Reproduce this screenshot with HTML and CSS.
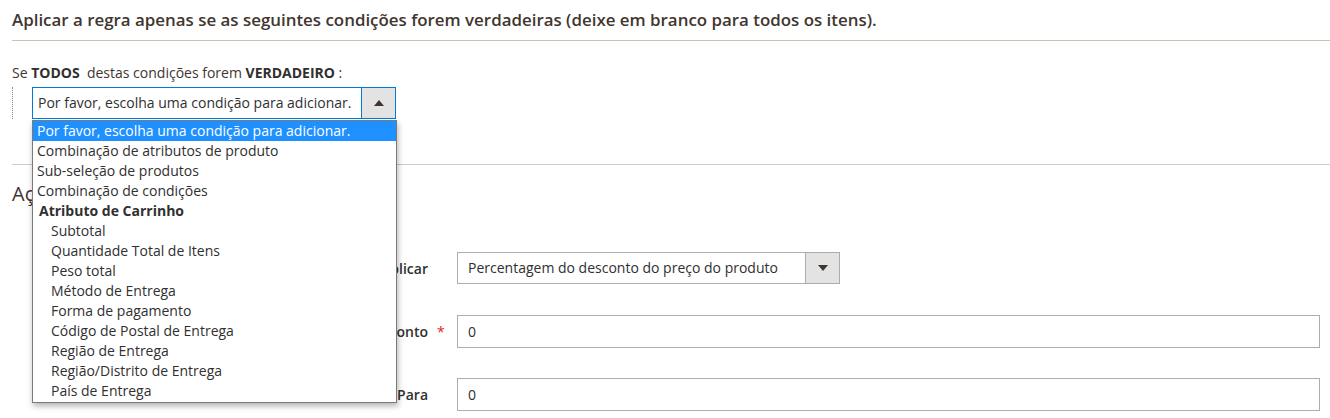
FILE: index.html
```html
<!DOCTYPE html>
<html lang="pt">
<head>
<meta charset="utf-8">
<title>Condições</title>
<link rel="stylesheet" href="styles.css">
</head>
<body>
<div class="page">
  <div class="fs-title">Aplicar a regra apenas se as seguintes condições forem verdadeiras (deixe em branco para todos os itens).</div>
  <div class="rule">
    <p class="rule-head">Se <b>TODOS</b>&nbsp; destas condições forem <b>VERDADEIRO</b> :</p>
    <div class="tree">
      <div class="cond-select">
        <span class="cs-text">Por favor, escolha uma condição para adicionar.</span>
        <span class="cs-btn"><svg width="10" height="6" viewBox="0 0 10 6"><path d="M0 6 L5 0 L10 6 Z" fill="#41362f"/></svg></span>
        <ul class="dropdown">
          <li class="hl">Por favor, escolha uma condição para adicionar.</li>
          <li>Combinação de atributos de produto</li>
          <li>Sub-seleção de produtos</li>
          <li>Combinação de condições</li>
          <li class="grp">Atributo de Carrinho</li>
          <li class="sub">Subtotal</li>
          <li class="sub">Quantidade Total de Itens</li>
          <li class="sub">Peso total</li>
          <li class="sub">Método de Entrega</li>
          <li class="sub">Forma de pagamento</li>
          <li class="sub">Código de Postal de Entrega</li>
          <li class="sub">Região de Entrega</li>
          <li class="sub">Região/Distrito de Entrega</li>
          <li class="sub">País de Entrega</li>
        </ul>
      </div>
    </div>
  </div>
  <div class="section">
    <h2 class="sec-title">Ações</h2>
    <div class="form">
      <div class="row">
        <label class="lbl"><span>Aplicar</span><span class="req"></span></label>
        <div class="sel">
          <span class="sel-text">Percentagem do desconto do preço do produto</span>
          <span class="sel-btn"><svg width="10" height="6" viewBox="0 0 10 6"><path d="M0 0 L10 0 L5 6 Z" fill="#41362f"/></svg></span>
        </div>
      </div>
      <div class="row">
        <label class="lbl"><span>Montante do Desconto</span><span class="req">*</span></label>
        <div class="inp">0</div>
      </div>
      <div class="row">
        <label class="lbl"><span>Quantidade Máxima de Desconto Aplicada Para</span><span class="req"></span></label>
        <div class="inp">0</div>
      </div>
    </div>
  </div>
</div>
</body>
</html>
```
FILE: styles.css
```css
* { box-sizing: border-box; }
html, body { margin: 0; padding: 0; background: #fff; }
body {
  font-family: "Open Sans", "Noto Sans", sans-serif;
  color: #303030;
  font-size: 14px;
  overflow: hidden;
}
.page { padding-left: 12px; }
.fs-title {
  font-size: 16.9px;
  font-weight: 600;
  color: #41362f;
  height: 41px;
  padding-top: 7px;
  line-height: 25px;
  border-bottom: 1px solid #cac3b4;
}
.rule { height: 124px; border-bottom: 1px solid #cccccc; }
.rule-head {
  margin: 0;
  padding-top: 22px;
  font-size: 14px;
  line-height: 19px;
  color: #41362f;
}
.rule-head b { font-weight: 700; color: #303030; }
.tree {
  margin-top: 5px;
  border-left: 1px dotted #888;
  height: 32px;
  padding-left: 19px;
}
.cond-select {
  position: relative;
  width: 364px;
  height: 32px;
  border: 1px solid #007bdb;
  display: flex;
  background: #fff;
}
.cs-text {
  flex: 1;
  padding-left: 5px;
  line-height: 30px;
  font-size: 14px;
  color: #303030;
}
.cs-btn {
  width: 34px;
  background: #e3e3e3;
  border-left: 1px solid #007bdb;
  display: flex;
  align-items: center;
  justify-content: center;
}
.dropdown {
  position: absolute;
  left: -1px;
  top: 32px;
  width: 365px;
  margin: 0;
  padding: 0 0 1px;
  list-style: none;
  background: #fff;
  border: 1px solid #7a7a7a;
  box-shadow: 1px 3px 6px rgba(0,0,0,0.3);
  z-index: 5;
}
.dropdown li {
  height: 20px;
  line-height: 20px;
  padding-left: 4px;
  font-size: 14px;
  color: #303030;
  white-space: nowrap;
}
.dropdown li.hl { background: #1e90ff; color: #fff; }
.dropdown li.grp { font-weight: 700; padding-left: 6px; }
.dropdown li.sub { padding-left: 18px; }
.section { padding-top: 15px; }
.sec-title {
  margin: 0;
  font-size: 20px;
  font-weight: 400;
  color: #41362f;
  line-height: 28px;
}
.form { padding-top: 44px; padding-right: 10px; }
.row { display: flex; align-items: center; height: 32px; margin-bottom: 31px; }
.lbl {
  width: 445px;
  flex: none;
  display: flex;
  justify-content: flex-end;
  font-weight: 600;
  font-size: 14px;
  color: #303030;
  white-space: nowrap;
  overflow: hidden;
}
.req { width: 29px; padding-left: 9px; color: #e22626; font-weight: 400; flex: none; }
.sel {
  width: 383px;
  height: 32px;
  border: 1px solid #adadad;
  display: flex;
}
.sel-text { flex: 1; padding-left: 10px; line-height: 30px; }
.sel-btn {
  width: 34px;
  background: #e3e3e3;
  border-left: 1px solid #adadad;
  display: flex;
  align-items: center;
  justify-content: center;
}
.inp {
  flex: 1;
  height: 33px;
  border: 1px solid #adadad;
  padding-left: 10px;
  line-height: 31px;
}
```
